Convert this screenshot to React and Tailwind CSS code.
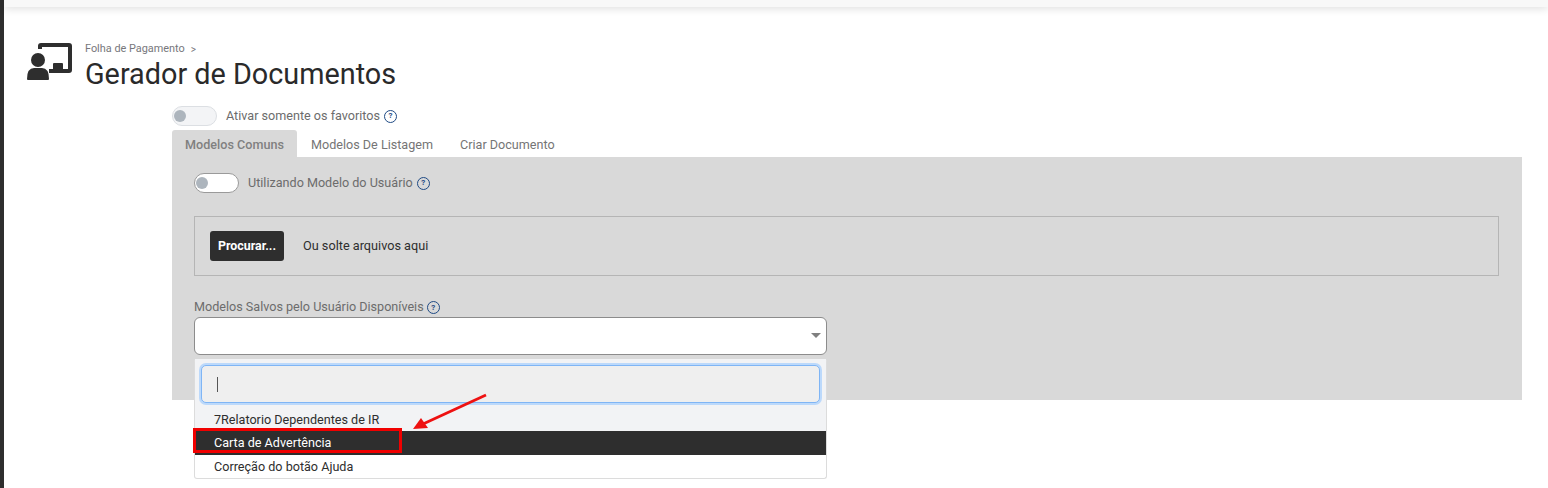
import * as React from 'react';

function HelpIcon({ className = 'ml-1' }) {
  return (
    <span className={`${className} flex size-[13px] shrink-0 items-center justify-center rounded-full border border-[#1f4a84] text-[8px] font-bold leading-none text-[#1f4a84]`}>
      ?
    </span>
  );
}

function Toggle({ white }) {
  return (
    <div className={`flex h-5 w-[45px] items-center rounded-full border px-[1px] ${white ? 'border-[#9a9a9a] bg-white' : 'border-[#dcdfe3] bg-[#f3f4f6]'}`}>
      <span className="size-3 rounded-full bg-[#adb5bd]" />
    </div>
  );
}

function BoardIcon() {
  return (
    <svg width="46" height="37" viewBox="0 0 46 37" className="shrink-0">
      <path d="M12 6 V3 Q12 0 15 0 H43 Q46 0 46 3 V27 Q46 30 43 30 H23 V26 H42 V4 H16 V6 Z" fill="#2e2e2e" />
      <rect x="27" y="20" width="10" height="7" rx="1" fill="#2e2e2e" />
      <circle cx="12" cy="17" r="7" fill="#2e2e2e" />
      <path d="M1 36 Q1 25 8 25 H16 Q23 25 23 36 Q23 37 22 37 H2 Q1 37 1 36 Z" fill="#2e2e2e" />
    </svg>
  );
}

export default function App() {
  return (
    <div className="relative flex h-[488px] w-full overflow-hidden bg-white font-['Roboto',sans-serif]">
      <div className="w-1 shrink-0 bg-[#2e2e2e]" />
      <div className="min-w-0 flex-1">
        <div className="h-[7px] bg-[#f8f8f8] shadow-[0_1px_8px_rgba(0,0,0,0.16)]" />

        <div className="mt-[36px] flex items-start pl-[22px]">
          <BoardIcon />
          <div className="ml-[13px]">
            <div className="flex h-[13px] items-center text-[10.9px] leading-none text-[#77777c]">
              Folha de Pagamento
              <span className="ml-[6px] text-[10px]">&gt;</span>
            </div>
            <h1 className="mt-[2px] text-[28.8px] font-normal leading-[32px] text-[#2a2a2a]">Gerador de Documentos</h1>
          </div>
        </div>

        <div className="ml-[168px] mr-[26px] mt-[16px]">
          <div className="flex h-5 items-center">
            <Toggle />
            <span className="ml-[9px] text-[12.6px] text-[#6c6c6c]">Ativar somente os favoritos</span>
            <HelpIcon />
          </div>

          <div className="mt-1 flex h-[27px] text-[12.6px] text-[#757575]">
            <div className="flex w-[125px] items-center justify-center rounded-t-[3px] bg-[#d9d9d9] pt-[3px] font-medium text-[#808080]">Modelos Comuns</div>
            <div className="ml-[14px] flex items-center pt-[3px]">Modelos De Listagem</div>
            <div className="ml-[27px] flex items-center pt-[3px]">Criar Documento</div>
          </div>

          <div className="h-[243px] bg-[#d9d9d9] px-[22px] pt-[16px]">
            <div className="flex h-5 items-center">
              <Toggle white />
              <span className="ml-[9px] text-[12.6px] text-[#6c6c6c]">Utilizando Modelo do Usuário</span>
              <HelpIcon />
            </div>

            <div className="mr-px mt-[23px] flex h-[60px] items-center border border-[#b5b5b5] pl-[15px]">
              <button className="h-[30px] w-[74px] rounded-[3px] bg-[#2e2e2e] text-[12.4px] font-bold text-white">Procurar...</button>
              <span className="ml-[19px] text-[12.7px] text-[#2e2e2e]">Ou solte arquivos aqui</span>
            </div>

            <div className="mt-[24px] flex h-[15px] items-center text-[12.6px] text-[#6c6c6c]">
              Modelos Salvos pelo Usuário Disponíveis
              <HelpIcon className="ml-[3px]" />
            </div>

            <div className="relative mt-[2px] w-[633px]">
              <div className="relative h-[38px] rounded-[6px] border border-[#8c8c8c] bg-white">
                <span className="absolute right-[5px] top-[15px] h-0 w-0 border-x-[5px] border-t-[5px] border-x-transparent border-t-[#808080]" />
              </div>

              <div className="absolute left-0 top-[42px] z-10 h-[120px] w-full rounded-[3px] border border-[#dcdcdc] border-t-0 bg-white">
                <div className="bg-[#f2f3f5] px-[6px] pb-[5px] pt-[6px]">
                  <div className="flex h-[38px] items-center rounded-[5px] border border-[#7fb5f5] bg-[#efefef] pl-[15px] shadow-[0_0_0_2px_#bcd9fb]">
                    <span className="h-[15px] w-px bg-[#555555]" />
                  </div>
                </div>
                <div className="flex h-[23px] items-center bg-[#f2f3f5] pl-[19px] pt-[2px] text-[12.6px] text-[#2e2e2e]">7Relatorio Dependentes de IR</div>
                <div className="flex h-[24px] items-center bg-[#2e2e2e] pl-[19px] text-[12.6px] text-white">Carta de Advertência</div>
                <div className="flex h-[23px] items-center pl-[19px] pt-[2px] text-[12.6px] text-[#2e2e2e]">Correção do botão Ajuda</div>
              </div>
            </div>
          </div>
        </div>
      </div>

      {/* anotacoes por cima do print */}
      <div className="absolute left-[193px] top-[428px] z-20 h-[25px] w-[209px] border-[3px] border-[#f00000]" />
      <svg className="absolute left-[410px] top-[390px] z-20" width="80" height="45" viewBox="0 0 80 45">
        <path d="M76 5 L13 34" stroke="#ee1111" strokeWidth="2.8" fill="none" />
        <path d="M3 39 L11 28 L18 38 Z" fill="#ee1111" />
      </svg>
    </div>
  );
}
